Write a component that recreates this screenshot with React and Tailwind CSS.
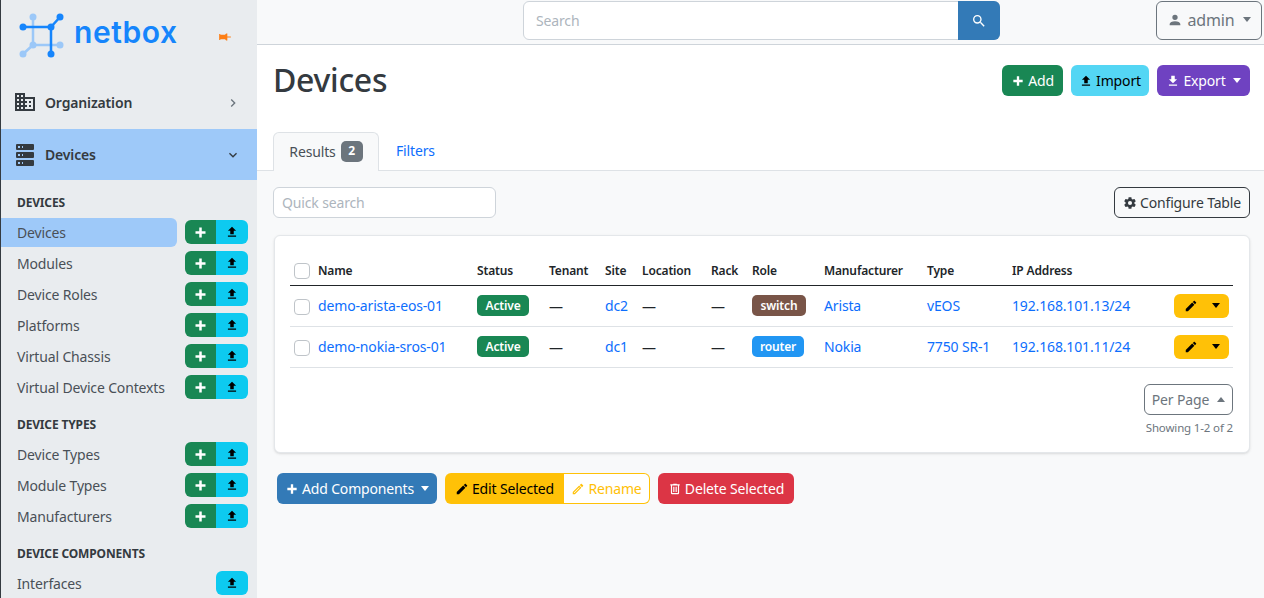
const ICONS = {
  plus: 'M20 14H14V20H10V14H4V10H10V4H14V10H20V14Z',
  upload: 'M9,16V10H5L12,3L19,10H15V16H9M5,20V18H19V20H5Z',
  download: 'M5,20H19V18H5M19,9H15V3H9V9H5L12,16L19,9Z',
  pencil: 'M20.71,7.04C21.1,6.65 21.1,6 20.71,5.63L18.37,3.29C18,2.9 17.35,2.9 16.96,3.29L15.12,5.12L18.87,8.87M3,17.25V21H6.75L17.81,9.93L14.06,6.18L3,17.25Z',
  pencilOutline: 'M14.06,9L15,9.94L5.92,19H5V18.08L14.06,9M17.66,3C17.41,3 17.15,3.1 16.96,3.29L15.13,5.12L18.88,8.87L20.71,7.04C21.1,6.65 21.1,6 20.71,5.63L18.37,3.29C18.17,3.09 17.92,3 17.66,3M14.06,6.19L3,17.25V21H6.75L17.81,9.94L14.06,6.19Z',
  trash: 'M9,3V4H4V6H5V19A2,2 0 0,0 7,21H17A2,2 0 0,0 19,19V6H20V4H15V3H9M7,6H17V19H7V6M9,8V17H11V8H9M13,8V17H15V8H13Z',
  cog: 'M12,15.5A3.5,3.5 0 0,1 8.5,12A3.5,3.5 0 0,1 12,8.5A3.5,3.5 0 0,1 15.5,12A3.5,3.5 0 0,1 12,15.5M19.43,12.97C19.47,12.65 19.5,12.33 19.5,12C19.5,11.67 19.47,11.34 19.43,11L21.54,9.37C21.73,9.22 21.78,8.95 21.66,8.73L19.66,5.27C19.54,5.05 19.27,4.96 19.05,5.05L16.56,6.05C16.04,5.66 15.5,5.32 14.87,5.07L14.5,2.42C14.46,2.18 14.25,2 14,2H10C9.75,2 9.54,2.18 9.5,2.42L9.13,5.07C8.5,5.32 7.96,5.66 7.44,6.05L4.95,5.05C4.73,4.96 4.46,5.05 4.34,5.27L2.34,8.73C2.21,8.95 2.27,9.22 2.46,9.37L4.57,11C4.53,11.34 4.5,11.67 4.5,12C4.5,12.33 4.53,12.65 4.57,12.97L2.46,14.63C2.27,14.78 2.21,15.05 2.34,15.27L4.34,18.73C4.46,18.95 4.73,19.03 4.95,18.95L7.44,17.94C7.96,18.34 8.5,18.68 9.13,18.93L9.5,21.58C9.54,21.82 9.75,22 10,22H14C14.25,22 14.46,21.82 14.5,21.58L14.87,18.93C15.5,18.67 16.04,18.34 16.56,17.94L19.05,18.95C19.27,19.03 19.54,18.95 19.66,18.73L21.66,15.27C21.78,15.05 21.73,14.78 21.54,14.63L19.43,12.97Z',
  account: 'M12,4A4,4 0 0,1 16,8A4,4 0 0,1 12,12A4,4 0 0,1 8,8A4,4 0 0,1 12,4M12,14C16.42,14 20,15.79 20,18V20H4V18C4,15.79 7.58,14 12,14Z',
  magnify: 'M9.5,3A6.5,6.5 0 0,1 16,9.5C16,11.11 15.41,12.59 14.44,13.73L14.71,14H15.5L20.5,19L19,20.5L14,15.5V14.71L13.73,14.44C12.59,15.41 11.11,16 9.5,16A6.5,6.5 0 0,1 3,9.5A6.5,6.5 0 0,1 9.5,3M9.5,5C7,5 5,7 5,9.5C5,12 7,14 9.5,14C12,14 14,12 14,9.5C14,7 12,5 9.5,5Z',
  domain: 'M18,15H16V17H18M18,11H16V13H18M20,19H12V17H14V15H12V13H14V11H12V9H20M10,7H8V5H10M10,11H8V9H10M10,15H8V13H10M10,19H8V17H10M6,7H4V5H6M6,11H4V9H6M6,15H4V13H6M6,19H4V17H6M12,7V3H2V21H22V7H12Z',
  server: 'M4,1H20A1,1 0 0,1 21,2V6A1,1 0 0,1 20,7H4A1,1 0 0,1 3,6V2A1,1 0 0,1 4,1M4,9H20A1,1 0 0,1 21,10V14A1,1 0 0,1 20,15H4A1,1 0 0,1 3,14V10A1,1 0 0,1 4,9M4,17H20A1,1 0 0,1 21,18V22A1,1 0 0,1 20,23H4A1,1 0 0,1 3,22V18A1,1 0 0,1 4,17M9,5H10V3H9V5M9,13H10V11H9V13M9,21H10V19H9V21M5,3V5H7V3H5M5,11V13H7V11H5M5,19V21H7V19H5Z',
  pin: 'M16,12V4H17V2H7V4H8V12L6,14V16H11.2V22H12.8V16H18V14L16,12Z',
  right: 'M8.59,16.58L13.17,12L8.59,7.41L10,6L16,12L10,18L8.59,16.58Z',
  down: 'M7.41,8.58L12,13.17L16.59,8.58L18,10L12,16L6,10L7.41,8.58Z',
}

const Icon = ({ name, className = 'w-[14px] h-[14px]' }) => (
  <svg viewBox="0 0 24 24" fill="currentColor" className={`shrink-0 ${className}`}>
    <path d={ICONS[name]} />
  </svg>
)

const Caret = ({ up, className = '' }) => (
  <span
    className={`inline-block w-0 h-0 border-x-[4.5px] border-x-transparent ${
      up ? 'border-b-[5px] border-b-current' : 'border-t-[5px] border-t-current'
    } ${className}`}
  />
)

const Logo = () => (
  <svg viewBox="0 0 64 64" className="w-[64px] h-[64px] shrink-0">
    <g stroke="#9cc8f8" strokeWidth="2.5" fill="#9cc8f8">
      <path d="M32 17V45H59M32 45L22 54" fill="none" />
      <circle cx="32" cy="17" r="3.5" stroke="none" />
      <circle cx="32" cy="45" r="3.5" stroke="none" />
      <circle cx="59" cy="45" r="3.5" stroke="none" />
      <circle cx="22" cy="54" r="3.5" stroke="none" />
    </g>
    <g stroke="#1685fc" strokeWidth="2.5" fill="#1685fc">
      <path d="M22 27H50V54M50 27L59 17" fill="none" />
      <circle cx="22" cy="27" r="3.5" stroke="none" />
      <circle cx="50" cy="27" r="3.5" stroke="none" />
      <circle cx="59" cy="17" r="3.5" stroke="none" />
      <circle cx="50" cy="54" r="3.5" stroke="none" />
    </g>
  </svg>
)

const MENU = [
  {
    title: 'DEVICES',
    items: [
      ['Devices', true, true],
      ['Modules', false, true],
      ['Device Roles', false, true],
      ['Platforms', false, true],
      ['Virtual Chassis', false, true],
      ['Virtual Device Contexts', false, true],
    ],
  },
  {
    title: 'DEVICE TYPES',
    items: [
      ['Device Types', false, true],
      ['Module Types', false, true],
      ['Manufacturers', false, true],
    ],
  },
  {
    title: 'DEVICE COMPONENTS',
    items: [['Interfaces', false, false]],
  },
]

const MenuRow = ({ label, active, add }) => (
  <div className="flex h-[31px] shrink-0">
    <div
      className={`w-[176px] h-[29px] pl-4 flex items-center rounded-r-md text-[14px] text-[#495057] ${
        active ? 'bg-[#9ec9f9]' : ''
      }`}
    >
      {label}
    </div>
    <div className="ml-2 mt-[2px] w-[63px] h-6 flex justify-end">
      {add && (
        <div className="w-[31px] flex items-center justify-center rounded-l-md bg-[#198754] text-white">
          <Icon name="plus" className="w-[15px] h-[15px]" />
        </div>
      )}
      <div
        className={`w-[32px] flex items-center justify-center bg-[#0dcaf0] text-black ${
          add ? 'rounded-r-md' : 'rounded-md'
        }`}
      >
        <Icon name="upload" className="w-[14px] h-[14px]" />
      </div>
    </div>
  </div>
)

const Sidebar = () => (
  <aside className="w-[257px] h-full shrink-0 overflow-hidden bg-[#e9ecef] border-l border-[#343a40] flex flex-col">
    <div className="h-[77px] shrink-0 flex items-start">
      <Logo />
      <span className="mt-[13px] ml-[9px] text-[30px] leading-[38px] font-semibold tracking-[0.6px] text-[#1685fc] font-['Inter',sans-serif]">
        netbox
      </span>
      <Icon name="pin" className="w-[14px] h-[14px] mt-[30px] ml-[40px] text-[#fd7e14] -rotate-90" />
    </div>
    <div className="h-[52px] shrink-0 flex items-center pl-[12px] pr-[16px] text-[#343a40]">
      <Icon name="domain" className="w-6 h-6 -mt-[3px]" />
      <span className="ml-[8px] pb-[2px] text-[14px] font-semibold">Organization</span>
      <Icon name="right" className="w-4 h-4 ml-auto text-[#6c757d]" />
    </div>
    <div className="h-[51px] shrink-0 flex items-center pl-[12px] pr-[16px] bg-[#9ec9f9] text-[#343a40]">
      <Icon name="server" className="w-6 h-6" />
      <span className="ml-[8px] text-[14px] font-semibold">Devices</span>
      <Icon name="down" className="w-4 h-4 ml-auto" />
    </div>
    {MENU.map((group, i) => (
      <div key={group.title} className="shrink-0">
        <div
          className={`h-8 pl-4 pt-[2px] flex items-center text-[12px] font-bold text-[#343a40] ${
            i === 0 ? 'mt-[6px]' : 'mt-1'
          }`}
        >
          {group.title}
        </div>
        {group.items.map(([label, active, add]) => (
          <MenuRow key={label} label={label} active={active} add={add} />
        ))}
      </div>
    ))}
  </aside>
)

const Button = ({ className = '', children }) => (
  <button className={`h-[31px] flex items-center rounded-md text-[14px] whitespace-nowrap ${className}`}>
    {children}
  </button>
)

const COLUMNS = ['w-[159px]', 'w-[72px]', 'w-[56px]', 'w-[37px]', 'w-[69px]', 'w-[41px]', 'w-[72px]', 'w-[103px]', 'w-[85px]', 'w-[162px]', 'w-[59px]']
const HEADERS = ['Name', 'Status', 'Tenant', 'Site', 'Location', 'Rack', 'Role', 'Manufacturer', 'Type', 'IP Address', '']

const ROWS = [
  { name: 'demo-arista-eos-01', site: 'dc2', role: 'switch', roleCls: 'bg-[#795548] w-[54px]', maker: 'Arista', type: 'vEOS', ip: '192.168.101.13/24' },
  { name: 'demo-nokia-sros-01', site: 'dc1', role: 'router', roleCls: 'bg-[#2196f3] w-[52px]', maker: 'Nokia', type: '7750 SR-1', ip: '192.168.101.11/24' },
]

const Check = ({ className = '' }) => (
  <span className={`block ml-[4px] w-4 h-4 bg-white border border-[#bfc4c9] rounded-[4px] ${className}`} />
)

const Badge = ({ className, children }) => (
  <span className={`h-[21px] flex items-center justify-center rounded-[5px] text-white text-[12px] font-semibold ${className}`}>
    {children}
  </span>
)

const Link = ({ children }) => <a className="block text-[#0d6efd] text-[14px] whitespace-nowrap">{children}</a>

const Dash = () => <span className="text-[14px] text-[#212529]">—</span>

const DevicesTable = () => (
  <table className="w-[943px] table-fixed">
    <colgroup>
      <col className="w-[28px]" />
      {COLUMNS.map((c, i) => (
        <col key={i} className={c} />
      ))}
    </colgroup>
    <thead>
      <tr className="h-[28px] border-b border-[#212529]">
        <th className="p-0 align-middle"><Check /></th>
        {HEADERS.map((h) => (
          <th key={h} className="p-0 text-left text-[12px] font-semibold text-[#212529] whitespace-nowrap">{h}</th>
        ))}
      </tr>
    </thead>
    <tbody>
      {ROWS.map((r) => (
        <tr key={r.name} className="h-[41px] border-b border-[#dee2e6]">
          <td className="p-0"><Check className="mt-[2px]" /></td>
          <td className="p-0"><Link>{r.name}</Link></td>
          <td className="p-0"><Badge className="bg-[#198754] w-[52px]">Active</Badge></td>
          <td className="p-0"><Dash /></td>
          <td className="p-0"><Link>{r.site}</Link></td>
          <td className="p-0"><Dash /></td>
          <td className="p-0"><Dash /></td>
          <td className="p-0"><Badge className={r.roleCls}>{r.role}</Badge></td>
          <td className="p-0"><Link>{r.maker}</Link></td>
          <td className="p-0"><Link>{r.type}</Link></td>
          <td className="p-0"><Link>{r.ip}</Link></td>
          <td className="p-0">
            <div className="w-[55px] h-6 flex items-center justify-between pl-[10px] pr-[9px] rounded-md bg-[#ffc107] text-black">
              <Icon name="pencil" className="w-[14px] h-[14px]" />
              <Caret />
            </div>
          </td>
        </tr>
      ))}
    </tbody>
  </table>
)

export default function App() {
  return (
    <div className="flex h-screen w-full overflow-hidden bg-[#f8f9fa] text-[#343a40] font-['Noto_Sans',sans-serif] tracking-[-0.15px]">
      <Sidebar />
      <main className="flex-1 min-w-0 flex flex-col">
        <header className="h-[45px] shrink-0 flex items-start border-b border-[#ced4da] pt-[1px]">
          <div className="ml-[266px] w-[477px] h-[39px] flex rounded-md bg-white border border-[#ced4da]">
            <span className="flex-1 pl-3 flex items-center text-[14px] text-[#adb5bd]">Search</span>
            <span className="w-[42px] -m-px flex items-center justify-center rounded-r-md bg-[#337ab7] text-white">
              <Icon name="magnify" className="w-4 h-4" />
            </span>
          </div>
          <button className="ml-auto mr-[2px] w-[106px] h-[39px] pb-[2px] flex items-center justify-center rounded-md border border-[#6c757d] text-[#6c757d] text-[16px]">
            <Icon name="account" className="w-4 h-4 mr-1" />
            admin
            <Caret className="ml-[8px]" />
          </button>
        </header>

        <section className="h-[126px] shrink-0 bg-white border-b border-[#dee2e6] flex flex-col">
          <div className="mt-[20px] pl-[17px] pr-[14px] h-[31px] flex items-center">
            <h1 className="-ml-px pb-[2px] text-[32px] font-medium text-[#343a40] tracking-[-0.3px]">Devices</h1>
            <div className="ml-auto flex gap-2">
              <Button className="w-[61px] justify-center bg-[#198754] text-white">
                <Icon name="plus" className="w-[14px] h-[14px] mr-[3px]" />
                Add
              </Button>
              <Button className="w-[78px] justify-center bg-[#54d6f4] text-black">
                <Icon name="upload" className="w-[14px] h-[14px] mr-[3px]" />
                Import
              </Button>
              <Button className="w-[93px] justify-center bg-[#6f42c1] text-white">
                <Icon name="download" className="w-[14px] h-[14px] mr-[3px]" />
                Export
                <Caret className="ml-[7px]" />
              </Button>
            </div>
          </div>
          <div className="mt-[36px] pl-4 flex items-start">
            <div className="w-[106px] h-[39px] pb-[2px] flex items-center justify-center rounded-t-md bg-[#f8f9fa] border border-b-0 border-[#dee2e6] text-[14px] text-[#495057]">
              Results
              <span className="ml-[5px] w-[22px] h-[21px] flex items-center justify-center rounded-[5px] bg-[#6c757d] text-white text-[12px] font-bold">2</span>
            </div>
            <span className="ml-[17px] h-[37px] flex items-center text-[14px] text-[#0d6efd]">Filters</span>
          </div>
        </section>

        <section className="flex-1 min-h-0 pl-4 pr-[14px] pt-4">
          <div className="flex justify-between">
            <div className="w-[223px] h-[31px] pl-2 flex items-center rounded-md bg-white border border-[#ced4da] text-[14px] text-[#adb5bd]">
              Quick search
            </div>
            <button className="w-[136px] h-[31px] flex items-center justify-center rounded-md border border-[#343a40] text-[14px] text-[#343a40]">
              <Icon name="cog" className="w-[14px] h-[14px] mr-[3px]" />
              Configure Table
            </button>
          </div>

          <div className="mt-[17px] ml-[1px] w-[976px] h-[218px] rounded-md bg-white border border-[#e4e7ea] shadow-sm pl-[15px] pr-[16px] pt-[21px] flex flex-col">
            <DevicesTable />
            <div className="mt-4 flex flex-col items-end">
              <button className="w-[89px] h-[31px] flex items-center justify-center rounded-md border border-[#6c757d] text-[14px] text-[#6c757d]">
                Per Page
                <Caret up className="ml-[8px]" />
              </button>
              <span className="mt-[4px] text-[11.5px] text-[#6c757d]">Showing 1-2 of 2</span>
            </div>
          </div>

          <div className="mt-5 ml-1 flex gap-2">
            <Button className="w-[160px] justify-center bg-[#337ab7] text-white">
              <Icon name="plus" className="w-[14px] h-[14px] mr-[3px]" />
              Add Components
              <Caret className="ml-[7px]" />
            </Button>
            <div className="flex">
              <Button className="w-[119px] justify-center rounded-r-none bg-[#ffc107] text-black">
                <Icon name="pencil" className="w-[14px] h-[14px] mr-[3px]" />
                Edit Selected
              </Button>
              <Button className="w-[86px] justify-center rounded-l-none bg-white border border-l-0 border-[#ffc107] text-[#ffc107]">
                <Icon name="pencilOutline" className="w-[14px] h-[14px] mr-[3px]" />
                Rename
              </Button>
            </div>
            <Button className="w-[136px] justify-center bg-[#dc3545] text-white">
              <Icon name="trash" className="w-[14px] h-[14px] mr-[3px]" />
              Delete Selected
            </Button>
          </div>
        </section>
      </main>
    </div>
  )
}
